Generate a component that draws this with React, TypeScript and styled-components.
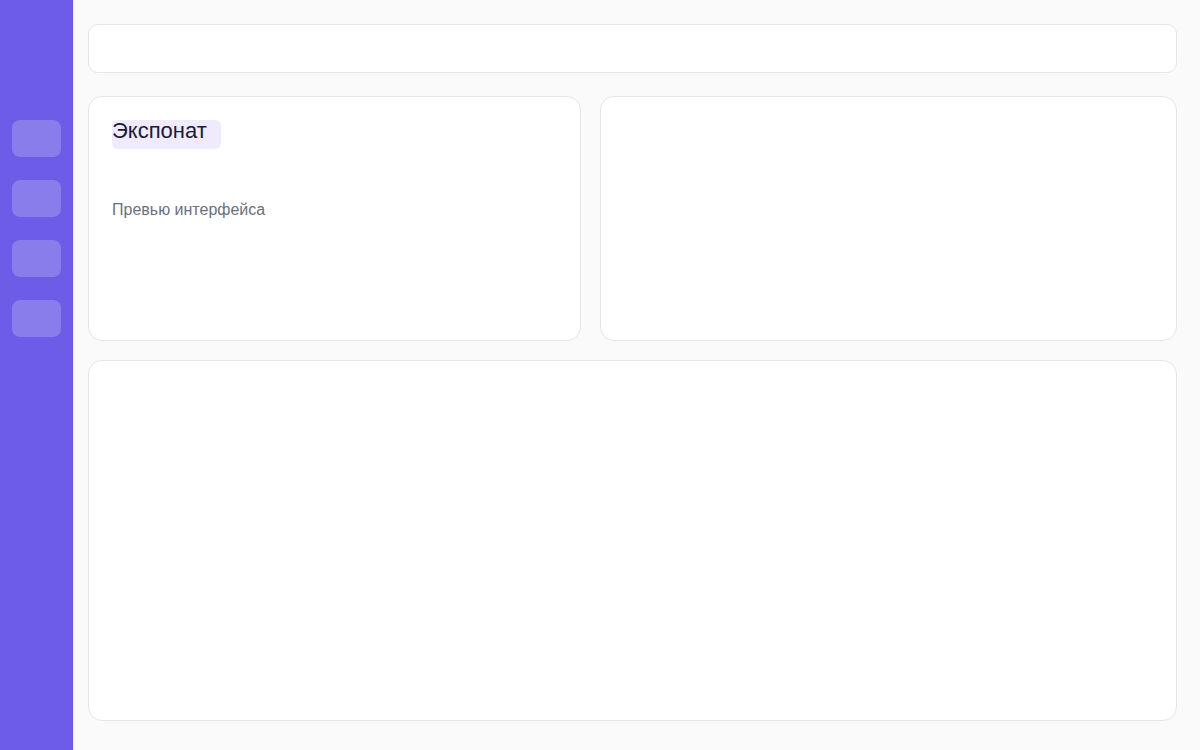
import styled, { createGlobalStyle } from 'styled-components';

const GlobalStyle = createGlobalStyle`
  * {
    box-sizing: border-box;
  }

  body {
    margin: 0;
    background: #fafafa;
    font-family: 'Liberation Sans', Arial, sans-serif;
  }
`;

const StyledLayout = styled.div`
  display: flex;
  width: 1200px;
  height: 750px;
  overflow: hidden;
`;

const StyledSidebar = styled.aside`
  flex: 0 0 73px;
  background: #6c5ce7;
  padding: 120px 12px 0;
  display: flex;
  flex-direction: column;
  gap: 23px;
`;

const StyledNavItem = styled.div`
  width: 49px;
  height: 37px;
  border-radius: 8px;
  background: rgba(255, 255, 255, 0.2);
`;

const StyledMain = styled.main`
  flex: 1;
  padding: 24px 23px 29px 15px;
  display: flex;
  flex-direction: column;
`;

const StyledCard = styled.div<{ $height: number; $radius?: number }>`
  height: ${({ $height }) => $height}px;
  background: #ffffff;
  border: 1px solid #e6e6e6;
  border-radius: ${({ $radius }) => $radius ?? 14}px;
`;

const StyledTopBar = styled(StyledCard)`
  margin-bottom: 23px;
`;

const StyledRow = styled.div`
  display: grid;
  grid-template-columns: 493px 1fr;
  gap: 19px;
  margin-bottom: 19px;
`;

const StyledExhibit = styled(StyledCard)`
  padding: 23px;
`;

const StyledTitle = styled.h2`
  margin: 0;
  width: 109px;
  height: 29px;
  border-radius: 6px;
  background: #efebfd;
  color: #1c1a33;
  font-size: 22px;
  font-weight: 400;
  line-height: 22px;
`;

const StyledCaption = styled.p`
  margin: 51px 0 0;
  color: #6b7080;
  font-size: 16px;
  line-height: 20px;
`;

const StyledBottom = styled(StyledCard)`
  flex: 1;
`;

const App = () => {
  return (
    <>
      <GlobalStyle />
      <StyledLayout>
        <StyledSidebar>
          {[0, 1, 2, 3].map((i) => (
            <StyledNavItem key={i} />
          ))}
        </StyledSidebar>

        <StyledMain>
          <StyledTopBar $height={49} $radius={10} />

          <StyledRow>
            <StyledExhibit $height={245}>
              <StyledTitle>Экспонат</StyledTitle>
              <StyledCaption>Превью интерфейса</StyledCaption>
            </StyledExhibit>
            <StyledCard $height={245} />
          </StyledRow>

          <StyledBottom $height={361} />
        </StyledMain>
      </StyledLayout>
    </>
  );
};

export default App;
